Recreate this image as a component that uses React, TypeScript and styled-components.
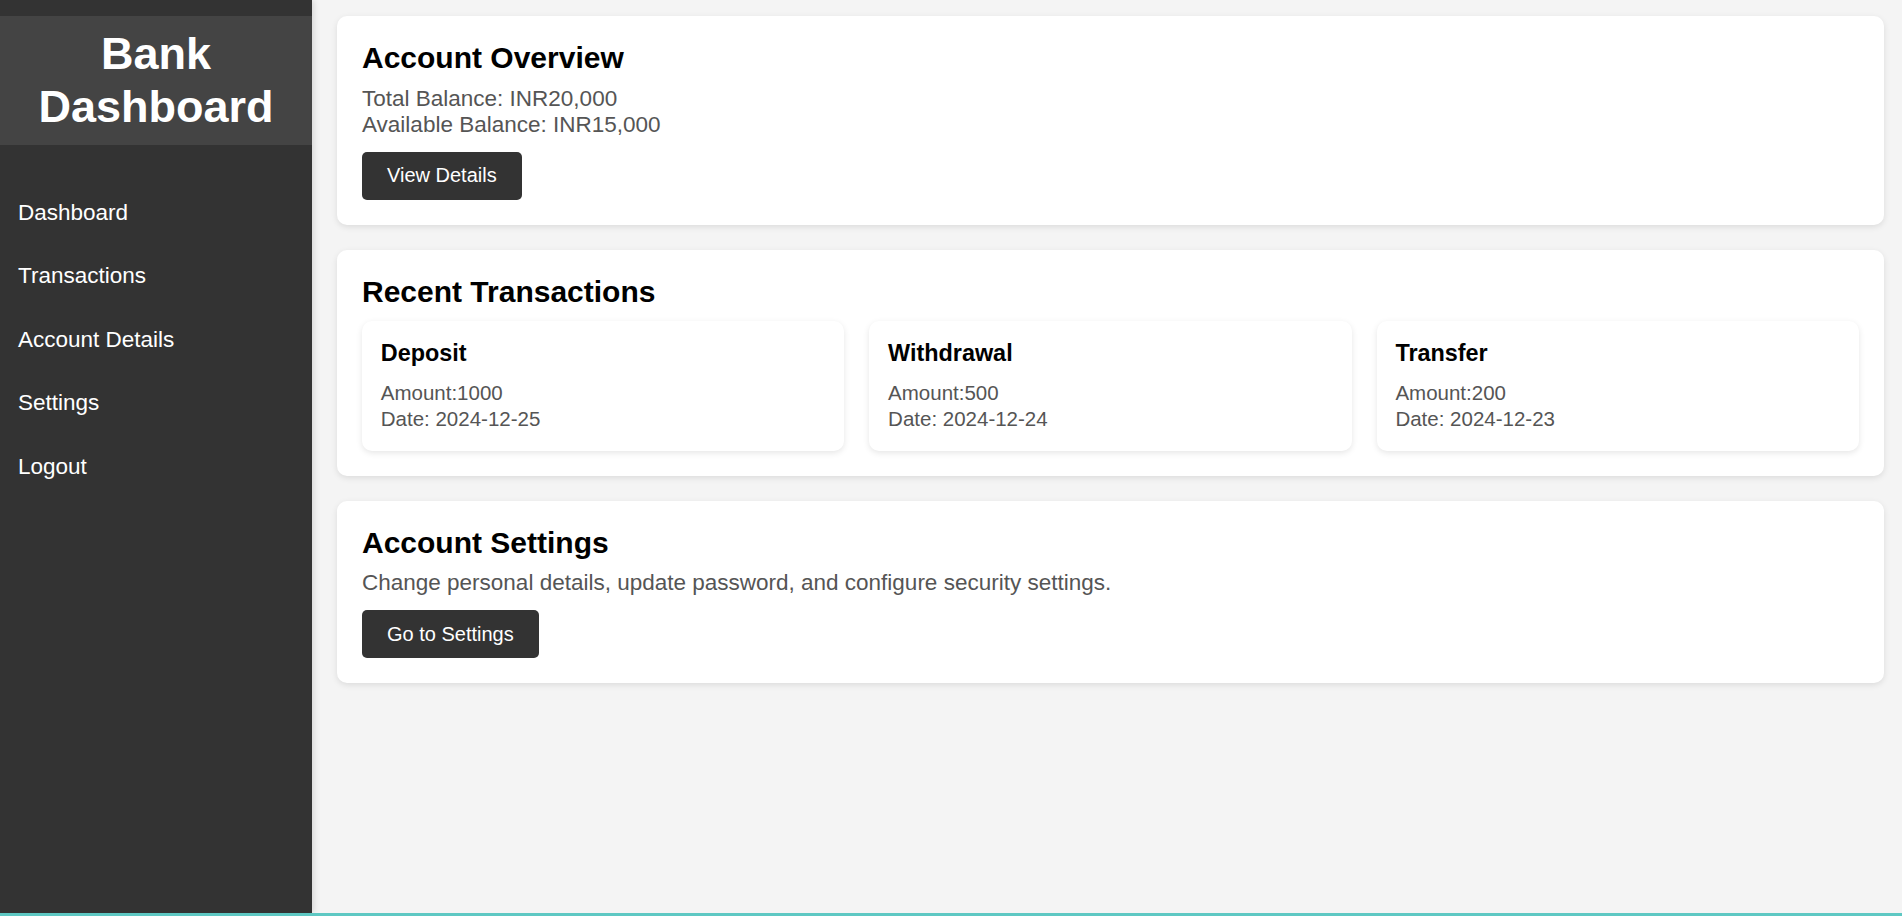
import * as React from 'react';
import styled, { createGlobalStyle } from 'styled-components';

const GlobalStyle = createGlobalStyle`
    html,
    body {
        margin: 0;
        padding: 0;
        font-family: 'Liberation Sans', Arial, sans-serif;
        background-color: #f4f4f4;
    }

    * {
        box-sizing: border-box;
    }
`;

const Layout = styled.div`
    display: flex;
    height: 100vh;
    overflow: hidden;
    border-bottom: 3px solid #5ec8c3;
`;

const Sidebar = styled.aside`
    width: 312px;
    flex-shrink: 0;
    background-color: #333;
    padding-top: 16px;
    box-shadow: 2px 0 6px rgba(0, 0, 0, 0.12);
    z-index: 1;
`;

const Brand = styled.h1`
    margin: 0;
    padding: 12px 0;
    background-color: #444;
    color: #fff;
    text-align: center;
    font-size: 45px;
    line-height: 52.5px;
    font-weight: bold;
`;

const NavList = styled.ul`
    list-style: none;
    margin: 0;
    padding: 36px 0 0;
`;

const NavItem = styled.li`
    padding: 18.75px 18px;
    color: #fff;
    font-size: 22.5px;
    line-height: 26px;
    cursor: pointer;
`;

const Main = styled.main`
    flex: 1;
    padding: 16px 18px 0 25px;
`;

const Card = styled.section`
    background-color: #fff;
    border-radius: 10px;
    padding: 25px;
    margin-bottom: 25px;
    box-shadow: 0 2px 6px rgba(0, 0, 0, 0.1);
`;

const Title = styled.h2`
    margin: 0 0 10px;
    font-size: 30px;
    line-height: 34.5px;
    font-weight: bold;
    color: #000;
`;

const Text = styled.p`
    margin: 0 0 13px;
    font-size: 22.5px;
    line-height: 26.7px;
    color: #555;
`;

const Button = styled.button`
    display: inline-block;
    height: 48px;
    padding: 0 25px;
    border: none;
    border-radius: 5px;
    background-color: #333;
    color: #fff;
    font-family: inherit;
    font-size: 20px;
    cursor: pointer;
`;

const TxGrid = styled.div`
    display: grid;
    grid-template-columns: repeat(3, 1fr);
    gap: 25px;
    margin-top: 12px;
`;

const TxCard = styled.div`
    background-color: #fff;
    border-radius: 10px;
    padding: 18.75px;
    box-shadow: 0 2px 6px rgba(0, 0, 0, 0.1);
`;

const TxTitle = styled.h3`
    margin: 0 0 13px;
    font-size: 23.4px;
    line-height: 27px;
    font-weight: bold;
    color: #000;
`;

const TxText = styled.p`
    margin: 0;
    font-size: 20.5px;
    line-height: 26px;
    color: #555;
`;

interface Transaction {
    type: string;
    amount: number;
    date: string;
}

const transactions: Array<Transaction> = [
    { type: 'Deposit', amount: 1000, date: '2024-12-25' },
    { type: 'Withdrawal', amount: 500, date: '2024-12-24' },
    { type: 'Transfer', amount: 200, date: '2024-12-23' },
];

const navLinks = ['Dashboard', 'Transactions', 'Account Details', 'Settings', 'Logout'];

export default function App() {
    return (
        <>
            <GlobalStyle />
            <Layout>
                <Sidebar>
                    <Brand>
                        Bank
                        <br />
                        Dashboard
                    </Brand>
                    <NavList>
                        {navLinks.map((link) => (
                            <NavItem key={link}>{link}</NavItem>
                        ))}
                    </NavList>
                </Sidebar>
                <Main>
                    <Card>
                        <Title>Account Overview</Title>
                        <Text>
                            Total Balance: INR20,000
                            <br />
                            Available Balance: INR15,000
                        </Text>
                        <Button>View Details</Button>
                    </Card>
                    <Card>
                        <Title>Recent Transactions</Title>
                        <TxGrid>
                            {transactions.map((tx) => (
                                <TxCard key={tx.type}>
                                    <TxTitle>{tx.type}</TxTitle>
                                    <TxText>
                                        Amount:{tx.amount}
                                        <br />
                                        Date: {tx.date}
                                    </TxText>
                                </TxCard>
                            ))}
                        </TxGrid>
                    </Card>
                    <Card>
                        <Title>Account Settings</Title>
                        <Text>Change personal details, update password, and configure security settings.</Text>
                        <Button>Go to Settings</Button>
                    </Card>
                </Main>
            </Layout>
        </>
    );
}
